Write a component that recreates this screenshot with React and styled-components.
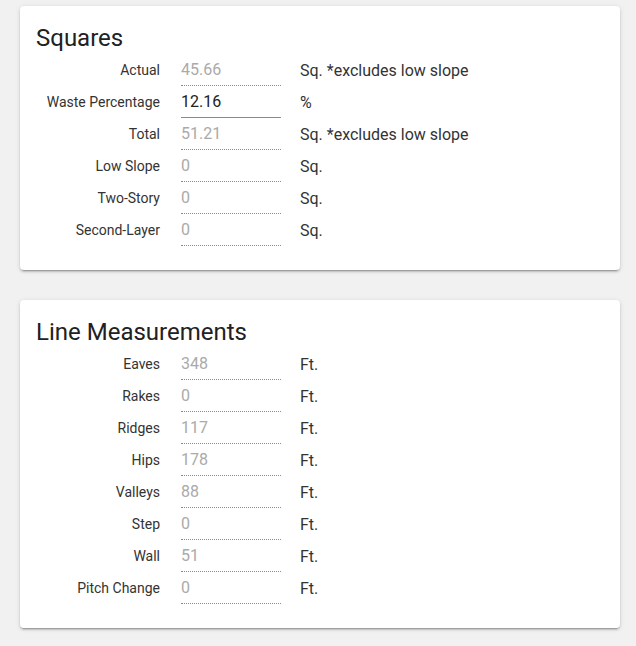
import styled, { createGlobalStyle } from "styled-components";

const GlobalStyle = createGlobalStyle`
  html, body {
    margin: 0;
    background: #f1f1f1;
    font-family: Roboto, "Liberation Sans", Arial, sans-serif;
  }
`;

// Sections and their measurement rows
const squares = [
  { label: "Actual", value: "45.66", unit: "Sq. *excludes low slope" },
  { label: "Waste Percentage", value: "12.16", unit: "%", editable: true },
  { label: "Total", value: "51.21", unit: "Sq. *excludes low slope" },
  { label: "Low Slope", value: "0", unit: "Sq." },
  { label: "Two-Story", value: "0", unit: "Sq." },
  { label: "Second-Layer", value: "0", unit: "Sq." },
];

const lines = [
  { label: "Eaves", value: "348", unit: "Ft." },
  { label: "Rakes", value: "0", unit: "Ft." },
  { label: "Ridges", value: "117", unit: "Ft." },
  { label: "Hips", value: "178", unit: "Ft." },
  { label: "Valleys", value: "88", unit: "Ft." },
  { label: "Step", value: "0", unit: "Ft." },
  { label: "Wall", value: "51", unit: "Ft." },
  { label: "Pitch Change", value: "0", unit: "Ft." },
];

function Section({ title, rows }) {
  return (
    <Card>
      <Title>{title}</Title>
      {rows.map((r) => (
        <Row key={r.label}>
          <Label>{r.label}</Label>
          <Field $editable={r.editable}>{r.value}</Field>
          <Unit>{r.unit}</Unit>
        </Row>
      ))}
    </Card>
  );
}

export default function App() {
  return (
    <>
      <GlobalStyle />
      <Page>
        <Section title="Squares" rows={squares} />
        <Section title="Line Measurements" rows={lines} />
      </Page>
    </>
  );
}

const Page = styled.div`
  display: flex;
  flex-direction: column;
  gap: 30px;
  padding: 6px 16px 18px 20px;
`;

const Card = styled.div`
  background: #fff;
  border-radius: 4px;
  padding: 16px 16px 24px;
  box-shadow: 0 3px 1px -2px rgba(0, 0, 0, 0.2), 0 2px 2px 0 rgba(0, 0, 0, 0.14),
    0 1px 5px 0 rgba(0, 0, 0, 0.12);
`;

const Title = styled.h2`
  margin: 0;
  font-size: 24px;
  font-weight: 400;
  line-height: 32px;
  color: #212121;
`;

const Row = styled.div`
  display: flex;
  align-items: center;
  height: 32px;
`;

const Label = styled.div`
  width: 124px;
  margin-right: 21px;
  text-align: right;
  font-size: 14px;
  color: #333;
`;

const Field = styled.div`
  width: 100px;
  height: 32px;
  box-sizing: border-box;
  display: flex;
  align-items: center;
  padding-bottom: 1px;
  font-size: 16px;
  color: ${(p) => (p.$editable ? "#222" : "#aaa")};
  border-bottom: 1px ${(p) => (p.$editable ? "solid #8a8a8a" : "dotted #8a8a8a")};
`;

const Unit = styled.div`
  margin-left: 19px;
  font-size: 16px;
  color: #333;
`;
